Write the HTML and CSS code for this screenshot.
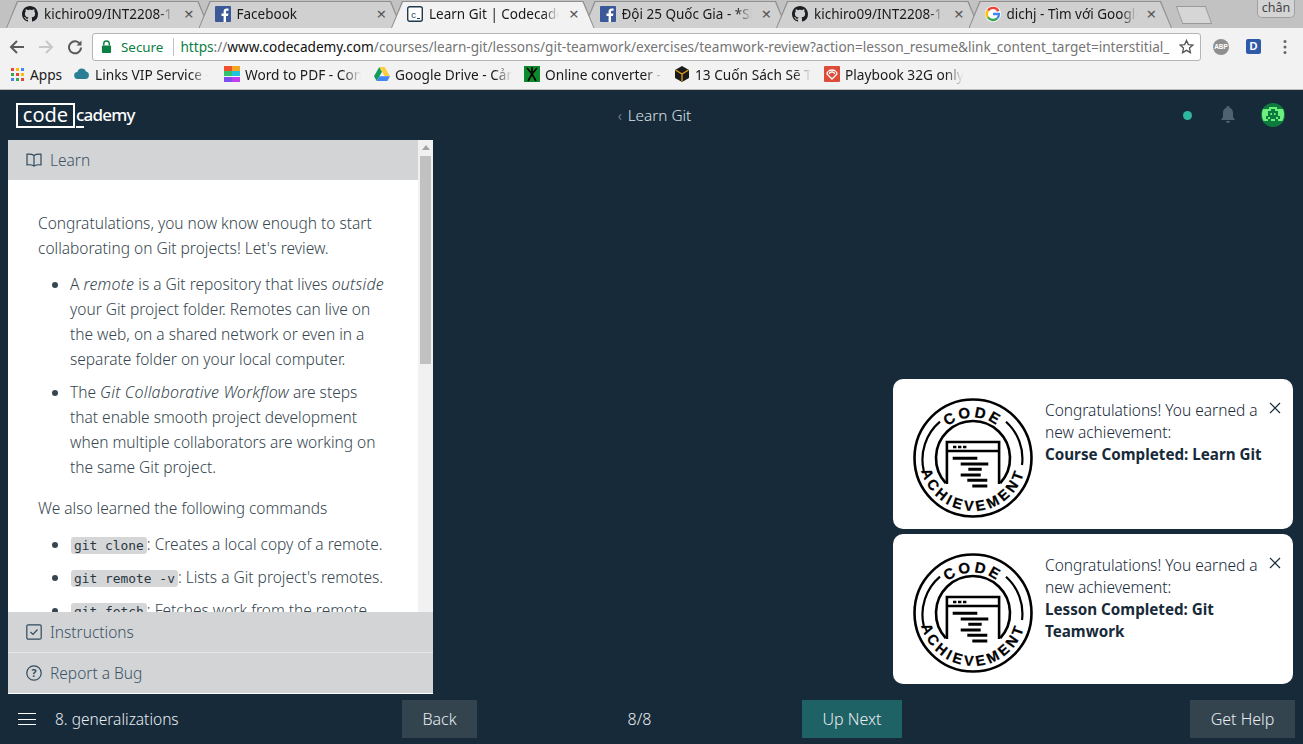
FILE: index.html
```html
<!DOCTYPE html>
<html lang="en">
<head>
<meta charset="utf-8">
<title>Learn Git | Codecademy</title>
<link rel="stylesheet" href="styles.css">
</head>
<body>
<svg class="defs" width="0" height="0" aria-hidden="true">
  <defs>
    <symbol id="i-gh" viewBox="0 0 16 16"><path fill="#1b1f23" d="M8 0C3.58 0 0 3.58 0 8c0 3.54 2.29 6.53 5.47 7.59.4.07.55-.17.55-.38 0-.19-.01-.82-.01-1.49-2.01.37-2.53-.49-2.69-.94-.09-.23-.48-.94-.82-1.13-.28-.15-.68-.52-.01-.53.63-.01 1.08.58 1.23.82.72 1.21 1.87.87 2.33.66.07-.52.28-.87.51-1.07-1.78-.2-3.64-.89-3.64-3.95 0-.87.31-1.59.82-2.15-.08-.2-.36-1.02.08-2.12 0 0 .67-.21 2.2.82.64-.18 1.32-.27 2-.27s1.36.09 2 .27c1.53-1.04 2.2-.82 2.2-.82.44 1.1.16 1.92.08 2.12.51.56.82 1.27.82 2.15 0 3.07-1.87 3.75-3.65 3.95.29.25.54.73.54 1.48 0 1.07-.01 1.93-.01 2.2 0 .21.15.46.55.38A8.01 8.01 0 0 0 16 8c0-4.42-3.58-8-8-8z"/></symbol>
    <symbol id="i-fb" viewBox="0 0 16 16"><rect width="16" height="16" rx="1" fill="#3b5998"/><path fill="#fff" d="M11 16v-6h2l.4-2.4H11V6c0-.7.3-1.2 1.2-1.2h1.3V2.6c-.3 0-1-.1-1.8-.1-1.9 0-3.1 1.1-3.1 3.2v1.9H6.5V10h2.1v6z"/></symbol>
    <symbol id="badge" viewBox="0 0 120 120">
      <path id="code-path" d="M19.5 60a40.5 40.5 0 0 1 81 0" fill="none"/>
      <path id="ach-path" d="M14.100 33.500A53 53 0 1 0 105.900 33.500" fill="none"/>
      <circle cx="60" cy="60" r="58.500" fill="none" stroke="#000" stroke-width="2.600"/>
      <path d="M32.700 85A37 37 0 1 1 87.300 85" fill="none" stroke="#000" stroke-width="2.600"/>
      <path d="M27 23.700A49.500 49.500 0 0 0 10.800 73M93 23.700A49.500 49.500 0 0 1 109 67" fill="none" stroke="#000" stroke-width="2.200"/>
      <path d="M33.900 86V44h52.200v42" fill="#fff" stroke="#000" stroke-width="2.600"/>
      <path d="M34 53h52" stroke="#000" stroke-width="2.400"/>
      <path d="M40 49h3.400M45 49h3.400M50 49h3.400" stroke="#000" stroke-width="2.400"/>
      <path d="M39.700 60.300h24.600M47.700 66h27.600M55.300 71.300h13.400M47.700 77h20M54.300 82.300h20M59.300 88h15" stroke="#000" stroke-width="3"/>
      <text class="badge-text"><textPath href="#code-path" startOffset="50%" text-anchor="middle">CODE</textPath></text>
      <text class="badge-text ach"><textPath href="#ach-path" startOffset="50%" text-anchor="middle">ACHIEVEMENT</textPath></text>
    </symbol>
  </defs>
</svg>

<header class="browser">
  <div class="tabs">
    <div class="tab"><svg class="fav"><use href="#i-gh"/></svg><span class="tab-title">kichiro09/INT2208-1-Git-Practice</span><span class="tab-x">×</span></div>
    <div class="tab"><svg class="fav"><use href="#i-fb"/></svg><span class="tab-title">Facebook</span><span class="tab-x">×</span></div>
    <div class="tab active"><svg class="fav" viewBox="0 0 16 16"><rect x=".7" y=".7" width="14.600" height="14.600" rx="2" fill="#fff" stroke="#1f3a4d" stroke-width="1.400"/><text x="4" y="11.500" class="fav-c">c</text><path d="M10 12.500h3" stroke="#1f3a4d"/></svg><span class="tab-title">Learn Git | Codecademy</span><span class="tab-x">×</span></div>
    <div class="tab"><svg class="fav"><use href="#i-fb"/></svg><span class="tab-title">Đội 25 Quốc Gia - *Sinh viên</span><span class="tab-x">×</span></div>
    <div class="tab"><svg class="fav"><use href="#i-gh"/></svg><span class="tab-title">kichiro09/INT2208-1-Git-Practice</span><span class="tab-x">×</span></div>
    <div class="tab"><svg class="fav" viewBox="0 0 16 16"><circle cx="8" cy="8" r="8" fill="#fff"/><path d="M13.400 5.200A6 6 0 0 0 3 4.600" fill="none" stroke="#ea4335" stroke-width="2.400"/><path d="M3 4.400a6 6 0 0 0 0 7.200" fill="none" stroke="#fbbc05" stroke-width="2.400"/><path d="M3 11.400a6 6 0 0 0 9.200.9" fill="none" stroke="#34a853" stroke-width="2.400"/><path d="M8 8h6c0 2-.7 3.400-1.800 4.300" fill="none" stroke="#4285f4" stroke-width="2.300"/></svg><span class="tab-title">dichj - Tìm với Google</span><span class="tab-x">×</span></div>
    <div class="new-tab"></div>
    <div class="user-chip">chân</div>
  </div>

  <div class="toolbar">
    <svg class="nav-icon" viewBox="0 0 16 16"><path d="M15 8H2M8 2 2 8l6 6" fill="none" stroke="#5a5a5a" stroke-width="2"/></svg>
    <svg class="nav-icon" viewBox="0 0 16 16"><path d="M1 8h13M8 2l6 6-6 6" fill="none" stroke="#c8c8c8" stroke-width="2"/></svg>
    <svg class="nav-icon" viewBox="0 0 16 16"><path d="M13.300 5.500A6 6 0 1 0 14 8.500" fill="none" stroke="#5a5a5a" stroke-width="2"/><path d="M14.500 1.500v5h-5z" fill="#5a5a5a"/></svg>
    <div class="omnibox">
      <svg class="lock" viewBox="0 0 12 14"><path d="M3 6V4a3 3 0 0 1 6 0v2" fill="none" stroke="#0b8043" stroke-width="1.500"/><rect x="1" y="6" width="10" height="8" rx="1" fill="#0b8043"/></svg>
      <span class="secure">Secure</span>
      <span class="omni-sep"></span>
      <span class="url"><span class="url-https">https</span><span class="url-dim">://</span><span class="url-host">www.codecademy.com</span><span class="url-dim">/courses/learn-git/lessons/git-teamwork/exercises/teamwork-review?action=lesson_resume&amp;link_content_target=interstitial_</span></span>
      <svg class="star" viewBox="0 0 16 16"><path d="m8 1.500 2 4.500 4.800.500-3.600 3.200 1 4.800L8 12.100l-4.200 2.400 1-4.800L1.200 6.500 6 6z" fill="none" stroke="#555" stroke-width="1.400"/></svg>
    </div>
    <span class="ext-abp">ABP</span>
    <span class="ext-d">D</span>
    <svg class="menu-dots" viewBox="0 0 4 16"><circle cx="2" cy="2.500" r="1.500"/><circle cx="2" cy="8" r="1.500"/><circle cx="2" cy="13.500" r="1.500"/></svg>
  </div>

  <div class="bookmarks">
    <div class="bm bm-apps"><span class="apps-grid"><i class="r"></i><i class="y"></i><i class="b"></i><i class="g"></i><i class="r"></i><i class="y"></i><i class="b"></i><i class="g"></i><i class="r"></i></span><span>Apps</span></div>
    <div class="bm bm-links"><svg class="bm-ic" viewBox="0 0 16 16"><path fill="#2a7f95" d="M4 13a3.500 3.500 0 0 1-.6-7A4.500 4.500 0 0 1 12 5.600 3.800 3.800 0 0 1 12 13z"/></svg><span class="bm-t">Links VIP Service - Get</span></div>
    <div class="bm bm-word"><span class="bm-word-ic"></span><span class="bm-t">Word to PDF - Convert</span></div>
    <div class="bm bm-drive"><svg class="bm-ic" viewBox="0 0 16 16"><path fill="#0f9d58" d="M5.300 1 0 10.300l2.700 4.700L8 5.700z"/><path fill="#ffcd40" d="M5.300 1h5.400L16 10.300h-5.300z"/><path fill="#4285f4" d="M16 10.300 13.300 15H2.700l2.700-4.700z"/></svg><span class="bm-t">Google Drive - Cảm</span></div>
    <div class="bm bm-conv"><svg class="bm-ic" viewBox="0 0 16 16"><rect width="16" height="16" fill="#0c8a2c"/><path d="M8 1v5M3 2l5 6 5-6M8 8l-4 7M8 8l4 7" stroke="#000" stroke-width="1.600" fill="none"/></svg><span class="bm-t">Online converter - Con</span></div>
    <div class="bm bm-book"><svg class="bm-ic" viewBox="0 0 16 16"><path fill="#1a1a1a" d="m8 0 7 4v8l-7 4-7-4V4z"/><path d="M1.500 4 8 8l6.500-4M8 8v7.500" stroke="#e3a11a" stroke-width="1.300" fill="none"/></svg><span class="bm-t">13 Cuốn Sách Sẽ Th</span></div>
    <div class="bm bm-play"><svg class="bm-ic" viewBox="0 0 16 16"><rect width="16" height="16" rx="1" fill="#dd4b39"/><path d="M3 8a5 4 0 0 1 10 0l-5 5zM5.500 8a2.500 2 0 0 1 5 0" fill="none" stroke="#fff" stroke-width="1.300"/></svg><span class="bm-t">Playbook 32G only</span></div>
  </div>
</header>

<main class="app">
  <div class="topbar">
    <div class="logo"><span class="logo-box">code</span><span class="logo-rest"><span class="logo-c">c</span>ademy</span></div>
    <div class="crumb"><span class="crumb-arrow">‹</span><span>Learn Git</span></div>
    <div class="top-right">
      <span class="status-dot"></span>
      <svg class="bell" viewBox="0 0 16 18"><path fill="#4f6272" d="M8 0a1.500 1.500 0 0 1 1.500 1.700C12 2.400 13 4.500 13 7v4l2 3H1l2-3V7c0-2.500 1-4.600 3.500-5.300A1.500 1.500 0 0 1 8 0zM6 15h4a2 2 0 0 1-4 0z"/></svg>
      <svg class="avatar" viewBox="0 0 24 24"><circle cx="12" cy="12" r="12" fill="#0f7a3e"/><path fill="#6cf07e" d="M2 6h6V4h8v2h6a12 12 0 0 1 1 6 12 12 0 0 1-1.500 6H2.500A12 12 0 0 1 1 12a12 12 0 0 1 1-6z"/><path fill="#0f7a3e" d="M10 6h4v2h3v5h2v3h-2v-2h-2v2h2v2h-3v-2h-4v2H7v-2h2v-2H7v2H5v-3h2V8h3z"/><path fill="#6cf07e" d="M9.500 10H11v2H9.500zM13 10h1.500v2H13z"/></svg>
    </div>
  </div>

  <div class="workspace">
    <section class="panel">
      <div class="panel-top">
        <div class="panel-col">
          <div class="panel-row learn-row">
            <svg class="row-ic" viewBox="0 0 16 14"><path d="M8 2.500C6.500 1.300 4 1 1 1.200v10.600c3-.2 5.500.1 7 1.300 1.500-1.200 4-1.500 7-1.300V1.200C12 1 9.500 1.300 8 2.500zM8 2.500v10.600" fill="none" stroke="#2f4a5e" stroke-width="1.200"/></svg>
            <span>Learn</span>
          </div>
          <article class="lesson">
            <p>Congratulations, you now know enough to start collaborating on Git projects! Let's review.</p>
            <ul>
              <li>A <em>remote</em> is a Git repository that lives <em>outside</em> your Git project folder. Remotes can live on the web, on a shared network or even in a separate folder on your local computer.</li>
              <li>The <em>Git Collaborative Workflow</em> are steps that enable smooth project development when multiple collaborators are working on the same Git project.</li>
            </ul>
            <p>We also learned the following commands</p>
            <ul>
              <li><code>git clone</code>: Creates a local copy of a remote.</li>
              <li><code>git remote -v</code>: Lists a Git project's remotes.</li>
              <li><code>git fetch</code>: Fetches work from the remote into the local copy.</li>
            </ul>
          </article>
        </div>
        <div class="scrollbar"><span class="sb-up"></span><span class="sb-thumb"></span></div>
      </div>
      <div class="panel-row instr-row">
        <svg class="row-ic" viewBox="0 0 16 16"><rect x=".8" y=".8" width="14.400" height="14.400" rx="1.500" fill="none" stroke="#2f4a5e" stroke-width="1.200"/><path d="m4.500 8 2.500 2.500 4.500-5" fill="none" stroke="#2f4a5e" stroke-width="1.200"/></svg>
        <span>Instructions</span>
      </div>
      <div class="panel-row bug-row">
        <svg class="row-ic" viewBox="0 0 16 16"><circle cx="8" cy="8" r="7.200" fill="none" stroke="#2f4a5e" stroke-width="1.200"/><text x="8" y="11.500" text-anchor="middle" class="q-mark">?</text></svg>
        <span>Report a Bug</span>
      </div>
    </section>

    <div class="toasts">
      <div class="toast">
        <svg class="badge"><use href="#badge"/></svg>
        <div class="toast-body">Congratulations! You earned a new achievement:<br><strong>Course Completed: Learn Git</strong></div>
        <svg class="toast-x" viewBox="0 0 12 12"><path d="m1 1 10 10M11 1 1 11" stroke="#172a3a" stroke-width="1.200"/></svg>
      </div>
      <div class="toast">
        <svg class="badge"><use href="#badge"/></svg>
        <div class="toast-body">Congratulations! You earned a new achievement:<br><strong>Lesson Completed: Git Teamwork</strong></div>
        <svg class="toast-x" viewBox="0 0 12 12"><path d="m1 1 10 10M11 1 1 11" stroke="#172a3a" stroke-width="1.200"/></svg>
      </div>
    </div>
  </div>

  <footer class="bottombar">
    <div class="bottom-left">
      <span class="burger"><i></i><i></i><i></i></span>
      <span>8. generalizations</span>
    </div>
    <div class="btn btn-back">Back</div>
    <div class="progress">8/8</div>
    <div class="btn btn-next">Up Next</div>
    <div class="btn btn-help">Get Help</div>
  </footer>
</main>
</body>
</html>
```

FILE: styles.css
```css
* { box-sizing: border-box; }
html, body { margin: 0; padding: 0; height: 100%; overflow: hidden; }
body { width: 1303px; height: 744px; display: flex; flex-direction: column; font-family: "Noto Sans", sans-serif; background: #172a3a; }
.defs { position: absolute; }

/* browser chrome */
.browser { height: 90px; flex: none; background: #f2f2f2; color: #1a1a1a; }
.tabs { height: 28px; background: #c2c2c2; display: flex; padding-left: 10px; position: relative; }
.tab { position: relative; width: 192.5px; height: 28px; flex: none; display: flex; align-items: center; padding: 0 8px 0 12px; font-size: 13.500px; z-index: 1; }
.tab::before { content: ""; position: absolute; left: -4px; right: -7px; top: 1px; bottom: 0; background: #8f8f8f; z-index: -2; clip-path: polygon(0 100%, 11px 0, calc(100% - 11px) 0, 100% 100%); }
.tab::after { content: ""; position: absolute; left: -3px; right: -6px; top: 2px; bottom: 0; background: #d0d0d0; z-index: -1; clip-path: polygon(0 100%, 11px 0, calc(100% - 11px) 0, 100% 100%); }
.tab.active::after { background: #f2f2f2; }
.tab.active { z-index: 2; }
.fav { width: 16px; height: 16px; flex: none; }
.fav-c { font: 9px "Liberation Mono", monospace; fill: #1f3a4d; }
.tab-title { margin-left: 6px; width: 130px; overflow: hidden; white-space: nowrap; flex: none; -webkit-mask-image: linear-gradient(to right, #000 88%, transparent); mask-image: linear-gradient(to right, #000 88%, transparent); }
.tab-x { margin-left: 10px; font-size: 17px; line-height: 16px; color: #555; }
.new-tab { width: 30px; height: 18px; margin: 6px 0 0 14px; background: #d6d6d6; border: 1px solid #9a9a9a; transform: skewX(20deg); }
.user-chip { position: absolute; right: 8px; top: 0; width: 38px; height: 18px; background: #d4d4d4; border: 1px solid #a0a0a0; border-top: 0; border-radius: 0 0 5px 5px; font-size: 12.500px; line-height: 16px; text-align: center; color: #444; }

.toolbar { height: 33px; display: flex; align-items: center; padding: 4px 10px 0 9px; background: #f2f2f2; }
.nav-icon { width: 16px; height: 16px; margin-right: 13px; flex: none; }
.omnibox { width: 1109px; height: 28px; margin-left: -4px; background: #fff; border: 1px solid #b5b5b5; border-radius: 3px; display: flex; align-items: center; padding: 0 6px 0 8px; font-size: 13.400px; }
.lock { width: 11px; height: 13px; flex: none; margin-right: 9px; }
.secure { color: #0b8043; }
.omni-sep { width: 1px; height: 18px; background: #c4c4c4; margin: 0 6px 0 10px; flex: none; }
.url { flex: 1; overflow: hidden; white-space: nowrap; color: #666; font-size: 13.620px; }
.url-https { color: #0b8043; }
.url-dim { color: #757575; }
.url-host { color: #111; }
.star { width: 15px; height: 15px; flex: none; margin-left: 5px; }
.ext-abp { width: 16px; height: 16px; border-radius: 50%; background: #8f8f8f; color: #fff; font: 700 6.500px/16px "Liberation Sans", sans-serif; text-align: center; margin-left: 12px; flex: none; }
.ext-d { width: 15px; height: 15px; background: #2f5aa8; color: #fff; border-radius: 2px; font: 700 11px/15px "Liberation Sans", sans-serif; text-align: center; margin-left: 17px; flex: none; }
.menu-dots { width: 4px; height: 16px; margin-left: 22px; fill: #666; flex: none; }

.bookmarks { height: 29px; display: flex; align-items: center; padding: 0 0 2px 11px; font-size: 13.700px; border-bottom: 1px solid #bdbdbd; }
.bm { display: flex; align-items: center; flex: none; white-space: nowrap; }
.bm-ic { width: 16px; height: 16px; flex: none; margin-right: 5px; }
.bm-t { overflow: hidden; -webkit-mask-image: linear-gradient(to right, #000 85%, transparent); mask-image: linear-gradient(to right, #000 85%, transparent); }
.apps-grid { display: grid; grid-template-columns: repeat(3, 3px); gap: 2px; margin-right: 6px; }
.apps-grid i { width: 3px; height: 3px; display: block; }
.apps-grid .r { background: #ea4335; }
.apps-grid .y { background: #fbbc05; }
.apps-grid .b { background: #4285f4; }
.apps-grid .g { background: #34a853; }
.bm-apps { width: 63px; }
.bm-links { width: 150px; }
.bm-links .bm-t { width: 113px; }
.bm-word { width: 150px; }
.bm-word-ic { width: 16px; height: 16px; margin-right: 5px; background: linear-gradient(90deg, #f4502c 50%, #f4a51f 50%) top / 100% 33% no-repeat, linear-gradient(90deg, #2ec46b 50%, #1fc4e0 50%) center / 100% 34% no-repeat, linear-gradient(90deg, #7c4ff0 50%, #c23ff0 50%) bottom / 100% 33% no-repeat; }
.bm-word .bm-t { width: 116px; }
.bm-drive { width: 150px; }
.bm-drive .bm-t { width: 117px; }
.bm-conv { width: 150px; }
.bm-conv .bm-t { width: 118px; }
.bm-book { width: 150px; }
.bm-book .bm-t { width: 116px; }
.bm-play .bm-t { width: 118px; }

/* app */
.app { flex: 1; min-height: 0; display: flex; flex-direction: column; background: #172a3a; color: #fff; font-weight: 300; }
.topbar { height: 50px; flex: none; display: flex; align-items: center; padding: 0 18px 0 16px; position: relative; }
.logo { display: flex; align-items: center; font-size: 20px; font-weight: 400; line-height: 22px; }
.logo-box { border: 2px solid #fff; height: 25px; line-height: 19px; width: 59px; text-align: center; }
.logo-rest { letter-spacing: -.8px; margin-left: 1px; font-size: 17px; font-weight: 500; }
.logo-c { border-bottom: 2px solid #fff; }
.crumb { margin-left: 483px; display: flex; align-items: center; font-size: 15.300px; color: #dfe3e6; }
.crumb-arrow { margin-right: 6px; color: #8a98a3; }
.top-right { margin-left: auto; display: flex; align-items: center; }
.status-dot { width: 9px; height: 9px; border-radius: 50%; background: #2eb8a0; margin-right: 28px; }
.bell { width: 16px; height: 18px; margin-right: 25px; }
.avatar { width: 24px; height: 24px; }

.workspace { flex: 1; min-height: 0; padding-left: 8px; position: relative; }
.panel { width: 425px; height: 554px; display: flex; flex-direction: column; background: #fff; border-bottom: 1px solid #fff; }
.panel-top { flex: 1; min-height: 0; display: flex; }
.panel-col { width: 410px; display: flex; flex-direction: column; overflow: hidden; }
.panel-row { display: flex; align-items: center; height: 40px; flex: none; background: #d3d4d6; color: #3a5366; font-size: 15.500px; padding-left: 18px; }
.row-ic { width: 16px; height: 16px; margin-right: 8px; flex: none; }
.q-mark { font: 700 10.500px "Noto Sans", sans-serif; fill: #2f4a5e; }
.instr-row { border-bottom: 1px solid #e6e7e8; height: 41px; }
.bug-row { height: 40px; }
.scrollbar { width: 15px; background: #f1f1f1; display: flex; flex-direction: column; align-items: center; flex: none; padding-top: 5px; }
.sb-up { width: 0; height: 0; border: 4px solid transparent; border-top: 0; border-bottom: 5px solid #a3a3a3; }
.sb-thumb { width: 11px; height: 208px; margin-top: 6px; background: #c1c1c1; }

.lesson { flex: 1; min-height: 0; overflow: hidden; padding: 31px 30px 0; color: #36464f; font-size: 15.500px; line-height: 25px; }
.lesson p { margin: 0 0 11px; }
.lesson ul { margin: 0 0 16px; padding-left: 32px; }
.lesson li { margin-bottom: 8px; }
.lesson em { font-size: 16px; letter-spacing: .2px; }
.lesson code { font: 12.900px/1 "DejaVu Sans Mono", monospace; background: #d5d6d8; color: #2a3640; padding: 1px 3px; border-radius: 3px; margin-left: 1px; }

.toasts { position: absolute; left: 893px; top: 239px; display: flex; flex-direction: column; gap: 5px; }
.toast { width: 400px; height: 150px; background: #fff; border-radius: 10px; display: flex; align-items: flex-start; padding: 19px 20px; position: relative; color: #172a3a; font-size: 15.500px; line-height: 22px; }
.badge { width: 120px; height: 120px; flex: none; }
.badge-text { font: 700 15px "Liberation Sans", sans-serif; letter-spacing: 3px; fill: #000; stroke: #000; stroke-width: .25px; }
.ach { font-size: 14.500px; letter-spacing: 3.200px; }
.toast-body { margin-left: 12px; width: 225px; padding-top: 1px; }
.toast-body strong { font-size: 15.200px; font-weight: 700; }
.toast-x { position: absolute; right: 12px; top: 23px; width: 12px; height: 12px; }

.bottombar { height: 50px; flex: none; display: flex; align-items: center; font-size: 15.500px; }
.bottom-left { width: 402px; display: flex; align-items: center; padding-left: 18px; color: #e8ecef; }
.burger { width: 18px; height: 12px; margin-right: 19px; display: flex; flex-direction: column; justify-content: space-between; }
.burger i { display: block; height: 1px; background: #fff; }
.btn { height: 38px; display: flex; align-items: center; justify-content: center; color: #e8ecef; flex: none; font-size: 16px; }
.btn-back { width: 75px; background: #33444f; }
.progress { width: 325px; text-align: center; color: #e8ecef; font-size: 16px; }
.btn-next { width: 100px; background: #1f6265; }
.btn-help { width: 105px; margin-left: 288px; background: #33444f; }
```
